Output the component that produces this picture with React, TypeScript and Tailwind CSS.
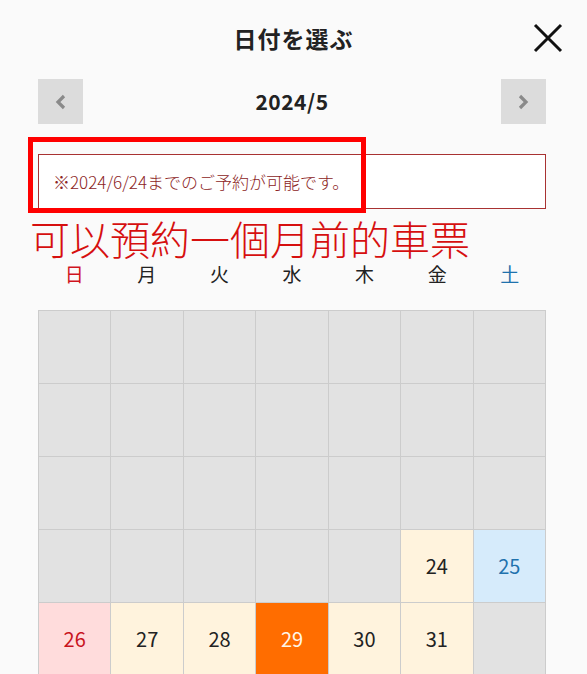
import React from 'react';

type Cell = {
  day?: number;
  kind: 'off' | 'open' | 'sat' | 'sun' | 'selected';
};

const weekdays = [
  { label: '日', color: 'text-[#d0141e]' },
  { label: '月', color: 'text-[#222]' },
  { label: '火', color: 'text-[#222]' },
  { label: '水', color: 'text-[#222]' },
  { label: '木', color: 'text-[#222]' },
  { label: '金', color: 'text-[#222]' },
  { label: '土', color: 'text-[#1f72ad]' },
];

const cells: Cell[] = [
  ...Array.from({ length: 26 }, () => ({ kind: 'off' as const })),
  { day: 24, kind: 'open' },
  { day: 25, kind: 'sat' },
  { day: 26, kind: 'sun' },
  { day: 27, kind: 'open' },
  { day: 28, kind: 'open' },
  { day: 29, kind: 'selected' },
  { day: 30, kind: 'open' },
  { day: 31, kind: 'open' },
  { kind: 'off' },
];

const cellStyle: Record<Cell['kind'], string> = {
  off: 'bg-[#e2e2e2]',
  open: 'bg-[#fff3dd] text-[#222]',
  sat: 'bg-[#d6ebfb] text-[#1f72ad]',
  sun: 'bg-[#ffdcdc] text-[#c8141e]',
  selected: 'bg-[#ff6d00] text-[#fff6e8]',
};

const App: React.FC = () => {
  return (
    <div className="min-h-[674px] w-[587px] bg-[#fafafa] font-['Noto_Sans_CJK_JP','Noto_Sans',sans-serif] overflow-hidden">
      {/* ヘッダー */}
      <div className="grid grid-cols-[60px_1fr_60px] items-center h-[76px] px-[23px]">
        <div />
        <h1 className="text-center text-[23px] font-bold text-[#222] tracking-[1px]">日付を選ぶ</h1>
        <button className="flex justify-end items-center h-[40px]">
          <svg width="32" height="32" viewBox="0 0 32 32">
            <path d="M3 3 L29 29 M29 3 L3 29" stroke="#111" strokeWidth="3" fill="none" />
          </svg>
        </button>
      </div>

      <div className="pl-[38px] pr-[41px] pt-[3px]">
        {/* 月ナビ */}
        <div className="flex items-center justify-between h-[45px]">
          <button className="w-[45px] h-[45px] bg-[#dcdcdc] flex items-center justify-center">
            <svg width="14" height="16" viewBox="0 0 14 16">
              <path d="M10 2 L4 8 L10 14" stroke="#8a8a8a" strokeWidth="3.2" fill="none" />
            </svg>
          </button>
          <div className="text-[21px] font-bold text-[#222] tracking-[0.5px]">2024/5</div>
          <button className="w-[45px] h-[45px] bg-[#dcdcdc] flex items-center justify-center">
            <svg width="14" height="16" viewBox="0 0 14 16">
              <path d="M4 2 L10 8 L4 14" stroke="#8a8a8a" strokeWidth="3.2" fill="none" />
            </svg>
          </button>
        </div>

        {/* 予約可能期間 */}
        <div className="relative mt-[30px]">
          <div className="h-[55px] border border-[#a83232] bg-white flex items-center pl-[14px]">
            <p className="text-[17px] text-[#8c2424] font-light">※2024/6/24までのご予約が可能です。</p>
          </div>
          <div className="absolute left-[-10px] top-[-17px] w-[338px] h-[76px] border-[5px] border-[#ff0000] pointer-events-none" />
        </div>

        <p className="ml-[-8px] mt-[9px] text-[40px] leading-[40px] text-[#d60f0f] font-['Noto_Sans_CJK_TC',sans-serif] font-light">
          可以預約一個月前的車票
        </p>

        {/* 曜日 */}
        <div className="grid grid-cols-7 mt-[1px] h-[30px] items-center">
          {weekdays.map((w) => (
            <div key={w.label} className={`text-center text-[19px] leading-[24px] ${w.color}`}>
              {w.label}
            </div>
          ))}
        </div>

        {/* カレンダー */}
        <div className="grid grid-cols-7 mt-[21px] border-l border-t border-[#cccccc]">
          {cells.map((c, i) => (
            <div
              key={i}
              className={`h-[73px] border-r border-b border-[#cccccc] flex items-center justify-center text-[20px] ${cellStyle[c.kind]}`}
            >
              {c.day}
            </div>
          ))}
        </div>
      </div>
    </div>
  );
};

export default App;
